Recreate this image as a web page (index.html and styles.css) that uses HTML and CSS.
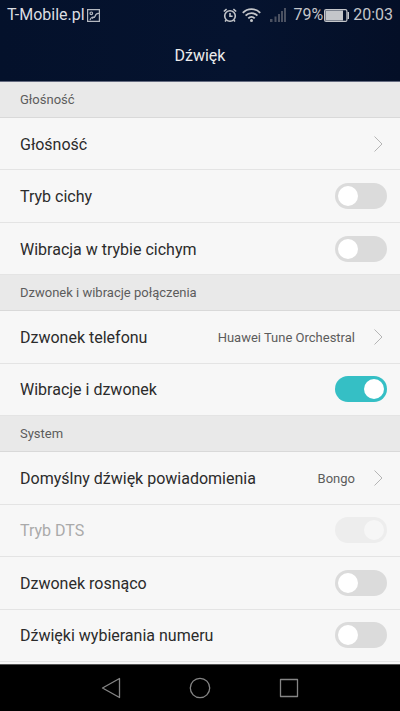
FILE: index.html
```html
<!DOCTYPE html>
<html lang="pl">
<head>
<meta charset="utf-8">
<meta name="viewport" content="width=device-width, initial-scale=1">
<title>Dźwięk</title>
<link rel="stylesheet" href="styles.css">
</head>
<body>
<header class="top">
  <div class="status">
    <span>T-Mobile.pl</span>
    <svg class="picture" width="13" height="13" viewBox="0 0 13 13" fill="none" stroke="currentColor" stroke-width="1.200"><path d="M.6.6h11.800v11.800H.6zM3 11c1-3 3-3.500 5-2.500M12 4.500C9 4 8.500 5.500 8 7.500l-3 2"/><circle cx="4.300" cy="4.300" r="1.300"/></svg>
    <div class="indicators">
      <svg width="14" height="15" viewBox="0 0 14 15" fill="none" stroke="currentColor" stroke-width="1.600"><circle cx="7" cy="8" r="5.300"/><path d="M.8 3.500 3.600 1.100M13.200 3.500 10.400 1.100M7 5v3.300h2.600M3.200 12.200 2 13.600M10.800 12.200l1.200 1.400"/></svg>
      <svg class="wifi" width="19" height="14" viewBox="0 0 19 14" fill="none" stroke="currentColor" stroke-width="1.900"><path d="M.8 4.800C5.600-.1 13.400-.1 18.200 4.800M3.600 7.700c3.300-3.400 8.500-3.400 11.800 0M6.300 10.400c1.800-1.800 4.600-1.800 6.400 0"/><circle cx="9.500" cy="12.400" r="1.500" fill="currentColor" stroke="none"/></svg>
      <svg class="signal" width="16" height="14" viewBox="0 0 16 14" fill="currentColor"><path d="M0 11h2.500v3H0zM4.500 8.500h2V14h-2zM8 6h2v8H8zM11 3h2v11h-2zM14 0h2v14h-2z"/></svg>
      <span>79%</span>
      <svg class="battery" width="25" height="13" viewBox="0 0 25 13"><rect x=".6" y=".6" width="22.300" height="11.800" rx="1.500" fill="none" stroke="currentColor" stroke-width="1.200"/><path d="M1.500 1.500H19v10H1.500zM23.500 3H25v7h-1.500z" fill="currentColor"/></svg>
      <span>20:03</span>
    </div>
  </div>
  <h1 class="title">Dźwięk</h1>
</header>
<main class="list">
  <h2 class="section">Głośność</h2>
  <button class="row" type="button"><span class="name">Głośność</span><svg class="chevron" width="9" height="16" viewBox="0 0 9 16"><path d="M.5.5 8 8 .5 15.500"/></svg></button>
  <label class="row"><span class="name">Tryb cichy</span><input class="switch" type="checkbox" role="switch"></label>
  <label class="row"><span class="name">Wibracja w trybie cichym</span><input class="switch" type="checkbox" role="switch"></label>
  <h2 class="section">Dzwonek i wibracje połączenia</h2>
  <button class="row" type="button"><span class="name">Dzwonek telefonu</span><span class="value">Huawei Tune Orchestral</span><svg class="chevron" width="9" height="16" viewBox="0 0 9 16"><path d="M.5.5 8 8 .5 15.500"/></svg></button>
  <label class="row"><span class="name">Wibracje i dzwonek</span><input class="switch" type="checkbox" role="switch" checked></label>
  <h2 class="section">System</h2>
  <button class="row" type="button"><span class="name">Domyślny dźwięk powiadomienia</span><span class="value">Bongo</span><svg class="chevron" width="9" height="16" viewBox="0 0 9 16"><path d="M.5.5 8 8 .5 15.500"/></svg></button>
  <label class="row off"><span class="name">Tryb DTS</span><input class="switch" type="checkbox" role="switch" checked disabled></label>
  <label class="row"><span class="name">Dzwonek rosnąco</span><input class="switch" type="checkbox" role="switch"></label>
  <label class="row"><span class="name">Dźwięki wybierania numeru</span><input class="switch" type="checkbox" role="switch"></label>
</main>
<nav class="keys">
  <button class="key" type="button" aria-label="Wstecz"><svg width="22" height="22" viewBox="0 0 22 22"><path d="M2.500 11 19.500 1.500v19z"/></svg></button>
  <button class="key" type="button" aria-label="Ekran główny"><svg width="22" height="22" viewBox="0 0 22 22"><circle cx="11" cy="11" r="9.700"/></svg></button>
  <button class="key" type="button" aria-label="Ostatnie"><svg width="22" height="22" viewBox="0 0 22 22"><rect x="2.500" y="2.500" width="17" height="17"/></svg></button>
</nav>
</body>
</html>
```
FILE: styles.css
```css
* {
  box-sizing: border-box;
}

body {
  margin: 0;
  min-height: 100vh;
  display: flex;
  flex-direction: column;
  font-family: Roboto, sans-serif;
  font-size: 16px;
  line-height: 20px;
  color: #2b2b2b;
  background: #f7f7f7;
}

.top {
  background: linear-gradient(90deg, #04112b, #05132f 60%, #040f27);
  border-bottom: 1px solid #656b80;
}

.status {
  display: flex;
  align-items: center;
  height: 30px;
  padding: 0 7px;
  color: #dcdee2;
}

.picture {
  margin-left: 2px;
  color: #b4b8c0;
}

.indicators {
  display: flex;
  align-items: center;
  margin-left: auto;
  color: #c4c6ca;
}

.wifi {
  margin-left: 5px;
}

.signal {
  margin: 0 7px 0 9px;
  color: #4b5161;
}

.battery {
  margin: 0 4px 0 1px;
}

.title {
  margin: 0;
  height: 51px;
  padding-top: 16px;
  font-size: 16px;
  font-weight: 400;
  text-align: center;
  color: #ececec;
}

.list {
  flex: 1;
  display: flex;
  flex-direction: column;
  padding-bottom: 2px;
}

.section {
  flex: none;
  height: 36px;
  margin: 0;
  padding: 0 20px;
  font-size: 13px;
  font-weight: 400;
  line-height: 36px;
  color: #5c5c5c;
  background: #e9e9e9;
  border-bottom: 1px solid #d9d9d9;
}

.row {
  flex: 1 0 48px;
  display: flex;
  align-items: center;
  width: 100%;
  padding: 0 13px 0 20px;
  border: 0;
  border-bottom: 1px solid #e4e4e4;
  background: none;
  font: inherit;
  color: inherit;
  text-align: left;
}

.name {
  flex: 1;
  padding-top: 2px;
}

.value {
  padding-top: 2px;
  font-size: 13px;
  color: #5c5c5c;
}

.chevron {
  margin: 0 4px 0 19px;
  fill: none;
  stroke: #b5b5b5;
}

.switch {
  appearance: none;
  display: flex;
  width: 52px;
  height: 26px;
  margin: 0;
  padding: 3px;
  border-radius: 13px;
  background: #dbdbdb;
}

.switch::before {
  content: "";
  width: 20px;
  height: 20px;
  border-radius: 50%;
  background: #fff;
}

.switch:checked {
  justify-content: flex-end;
  background: #35bfc5;
}

.off {
  color: #aaa;
}

.off .switch {
  background: #ededed;
}

.off .switch::before {
  background: #f6f6f6;
}

.keys {
  display: flex;
  justify-content: center;
  gap: 45px;
  height: 47px;
  background: #000;
  border-top: 1px solid #555;
}

.key {
  display: flex;
  align-items: center;
  justify-content: center;
  width: 44px;
  padding: 0;
  border: 0;
  background: none;
}

.key svg {
  fill: none;
  stroke: #858585;
  stroke-width: 1.3;
  stroke-linejoin: round;
}
```
